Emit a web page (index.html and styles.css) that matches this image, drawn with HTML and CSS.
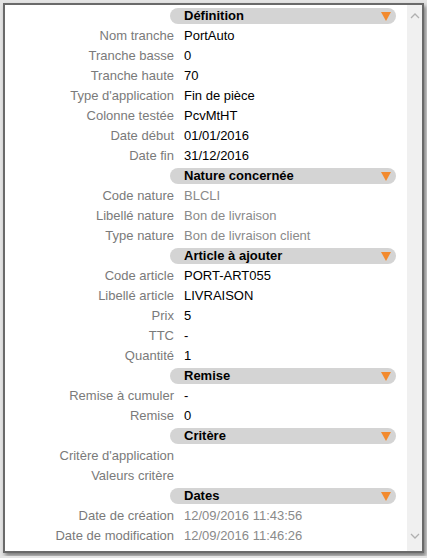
FILE: index.html
```html
<!DOCTYPE html>
<html>
<head>
    <title>Tranche</title>
    <link rel="stylesheet" href="styles.css">
</head>
<body>
    <div class="frame">
        <div class="content">
            <div class="section"><span>Définition</span><i class="arrow"></i></div>
            <div class="row"><label>Nom tranche</label><span>PortAuto</span></div>
            <div class="row"><label>Tranche basse</label><span>0</span></div>
            <div class="row"><label>Tranche haute</label><span>70</span></div>
            <div class="row"><label>Type d'application</label><span>Fin de pièce</span></div>
            <div class="row"><label>Colonne testée</label><span>PcvMtHT</span></div>
            <div class="row"><label>Date début</label><span>01/01/2016</span></div>
            <div class="row"><label>Date fin</label><span>31/12/2016</span></div>

            <div class="section"><span>Nature concernée</span><i class="arrow"></i></div>
            <div class="row muted"><label>Code nature</label><span>BLCLI</span></div>
            <div class="row muted"><label>Libellé nature</label><span>Bon de livraison</span></div>
            <div class="row muted"><label>Type nature</label><span>Bon de livraison client</span></div>

            <div class="section"><span>Article à ajouter</span><i class="arrow"></i></div>
            <div class="row"><label>Code article</label><span>PORT-ART055</span></div>
            <div class="row"><label>Libellé article</label><span>LIVRAISON</span></div>
            <div class="row"><label>Prix</label><span>5</span></div>
            <div class="row"><label>TTC</label><span>-</span></div>
            <div class="row"><label>Quantité</label><span>1</span></div>

            <div class="section"><span>Remise</span><i class="arrow"></i></div>
            <div class="row"><label>Remise à cumuler</label><span>-</span></div>
            <div class="row"><label>Remise</label><span>0</span></div>

            <div class="section"><span>Critère</span><i class="arrow"></i></div>
            <div class="row"><label>Critère d'application</label><span></span></div>
            <div class="row"><label>Valeurs critère</label><span></span></div>

            <div class="section"><span>Dates</span><i class="arrow"></i></div>
            <div class="row muted"><label>Date de création</label><span>12/09/2016 11:43:56</span></div>
            <div class="row muted"><label>Date de modification</label><span>12/09/2016 11:46:26</span></div>
        </div>
        <div class="scrollbar">
            <svg width="10" height="6" viewBox="0 0 10 6"><path d="M1 5 L5 1 L9 5" fill="none" stroke="#b0b0b0" stroke-width="1.3"/></svg>
            <svg width="10" height="6" viewBox="0 0 10 6"><path d="M1 1 L5 5 L9 1" fill="none" stroke="#b0b0b0" stroke-width="1.3"/></svg>
        </div>
    </div>
</body>
</html>
```

FILE: styles.css
```css
body {
    margin: 0;
    padding: 3px;
    background-color: #e4e4e4;
    font-family: 'Liberation Sans', Arial, sans-serif;
    font-size: 13px;
}
.frame {
    display: flex;
    width: 417px;
    height: 546px;
    background-color: #fff;
    border: 2px solid #6a6a6a;
    box-shadow: 2px 3px 4px rgba(0, 0, 0, 0.45);
}
.content {
    flex: 1;
    overflow: hidden;
    padding-top: 1px;
}
.row {
    display: flex;
    height: 20px;
    line-height: 20px;
    color: #000;
}
.row label {
    width: 169px;
    text-align: right;
    color: #7a7a7a;
    white-space: nowrap;
}
.row span {
    padding-left: 10px;
}
.row.muted span {
    color: #8a8a8a;
}
.section {
    display: flex;
    align-items: center;
    justify-content: space-between;
    height: 16px;
    margin: 2px 11px 2px 165px;
    padding: 0 5px 0 14px;
    background-color: #d4d4d4;
    border-radius: 8px;
    font-weight: bold;
    color: #000;
    line-height: 16px;
}
.arrow {
    width: 0;
    height: 0;
    border-left: 5px solid transparent;
    border-right: 5px solid transparent;
    border-top: 9px solid #f28a2e;
}
.scrollbar {
    width: 15px;
    background-color: #f0f0f0;
    display: flex;
    flex-direction: column;
    justify-content: space-between;
    align-items: center;
    padding: 8px 0 12px;
}
```
